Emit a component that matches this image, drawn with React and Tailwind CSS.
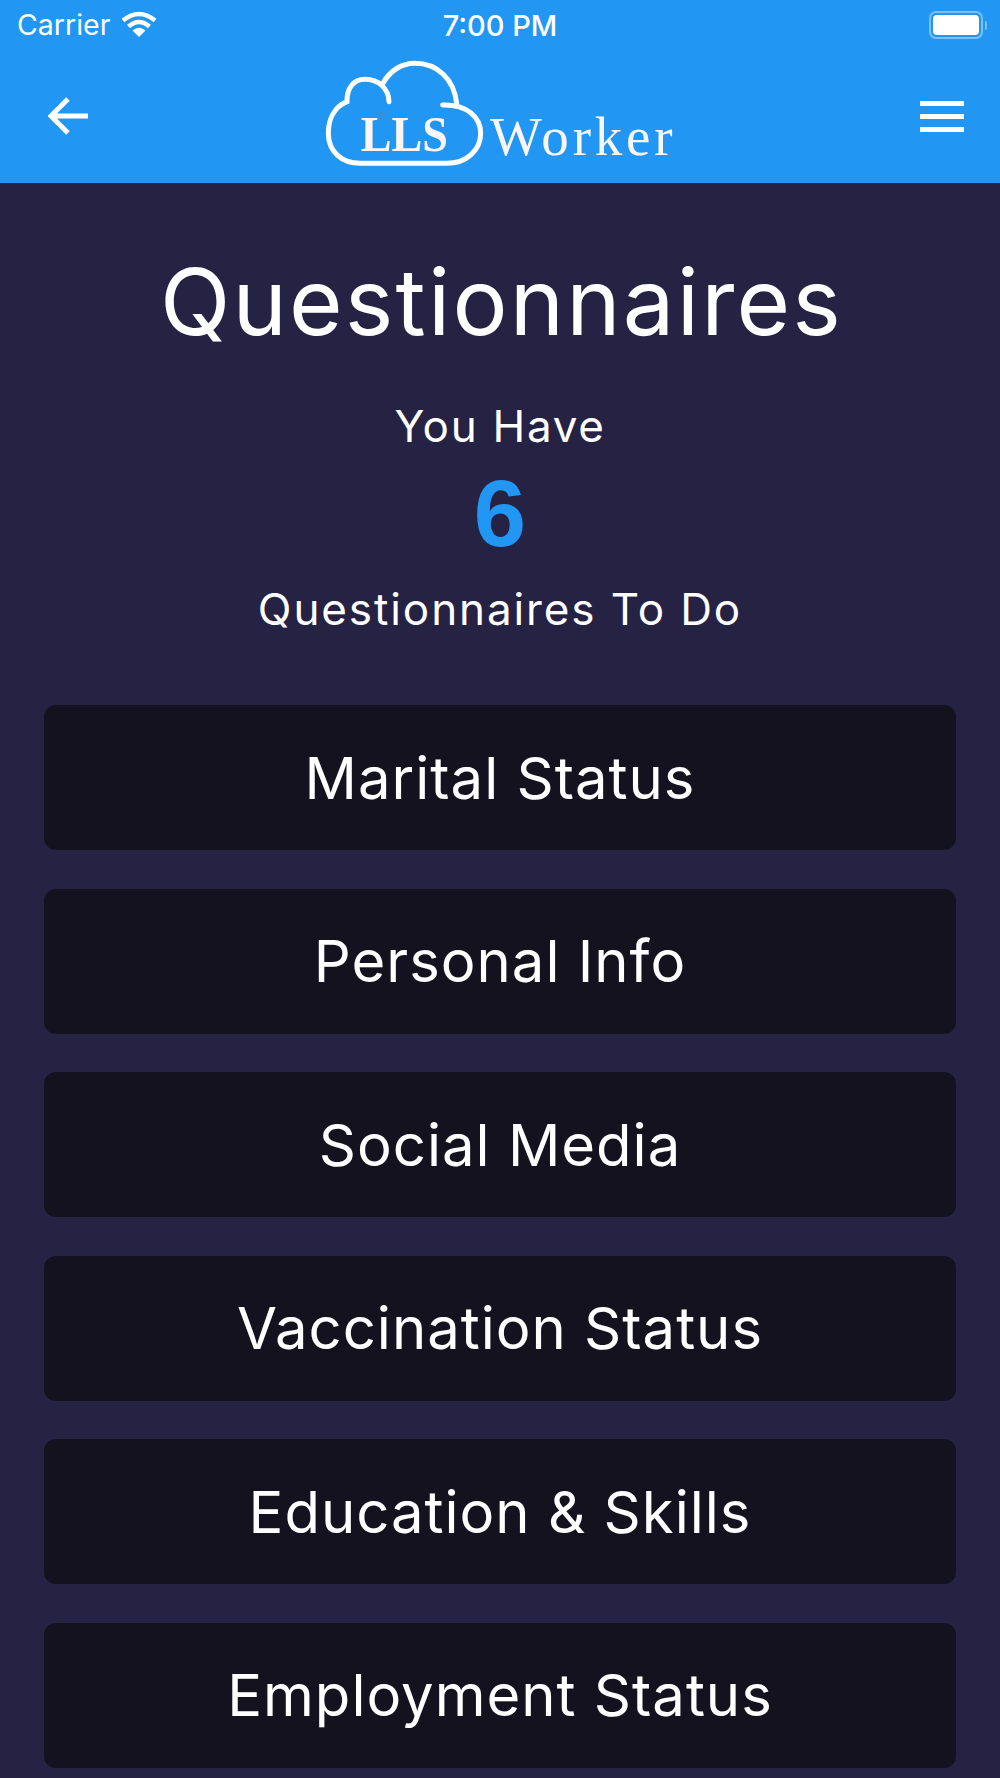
import React from 'react';

const items = ['Marital Status', 'Personal Info', 'Social Media', 'Vaccination Status', 'Education & Skills', 'Employment Status'];

const WifiIcon = () => (
  <svg width="38" height="28" viewBox="0 0 38 28" className="shrink-0 -mt-[3px]">
    <path d="M19 27 L12.5 20.5 Q19 15 25.5 20.5 Z" fill="#fff" />
    <path d="M8.5 16.5 Q19 7.5 29.5 16.5" fill="none" stroke="#fff" strokeWidth="4.5" />
    <path d="M3 10.5 Q19 -2.5 35 10.5" fill="none" stroke="#fff" strokeWidth="4.5" />
  </svg>
);

const BatteryIcon = () => (
  <div className="flex items-center gap-[2px]">
    <div className="w-[54px] h-[28px] rounded-[7px] border-[2px] border-white/40 p-[2px]">
      <div className="w-full h-full rounded-[4px] bg-white" />
    </div>
    <div className="w-[2px] h-[9px] rounded-r-full bg-white/40" />
  </div>
);

const Logo = () => (
  <svg width="400" height="125" viewBox="0 0 1200 375" className="block">
    <path
      d="M267 155 C266 115 235 88 195 88 C160 88 140 115 141 155 C105 170 85 205 85 250 C85 305 125 340 180 340 L440 340 C500 340 542 300 542 250 C542 200 500 163 428 165 M470 160 C462 85 410 40 345 40 C305 40 270 62 250 98"
      fill="none"
      stroke="#fff"
      strokeWidth="15"
      strokeLinecap="round"
    />
    <text x="182" y="302" fontFamily="'Liberation Serif', serif" fontWeight="700" fontSize="152" fill="#fbf5f5" textLength="262" lengthAdjust="spacingAndGlyphs">LLS</text>
    <text x="570" y="314" fontFamily="'Liberation Serif', serif" fontSize="165" fill="#fbf5f5" textLength="548" lengthAdjust="spacing">Worker</text>
  </svg>
);

export default function App() {
  return (
    <div className="w-[1000px] h-[1778px] overflow-hidden bg-[#252244] text-white font-['Inter',sans-serif]">
      {/* Header */}
      <div className="h-[183px] bg-[#2196f3]">
        <div className="h-[50px] flex items-center justify-between pl-[17px] pr-[13px] relative">
          <div className="flex items-center gap-[10px]">
            <span className="text-[28.5px] leading-none">Carrier</span>
            <WifiIcon />
          </div>
          <span className="absolute left-0 right-0 text-center text-[29px] leading-none font-medium">7:00 PM</span>
          <BatteryIcon />
        </div>
        <div className="h-[133px] flex items-start justify-between pl-[48px] pr-[36px] relative">
          <svg width="40" height="38" viewBox="0 0 40 38" className="mt-[47px]">
            <path d="M40 19 H3 M20 2 L3 19 L20 36" fill="none" stroke="#fff" strokeWidth="5" />
          </svg>
          <div className="absolute left-[300px] top-0">
            <Logo />
          </div>
          <div className="mt-[51px] w-[44px] flex flex-col gap-[8px]">
            <div className="h-[5px] bg-white" />
            <div className="h-[5px] bg-white" />
            <div className="h-[5px] bg-white" />
          </div>
        </div>
      </div>

      {/* Content */}
      <div className="flex flex-col items-center">
        <h1 className="mt-[64px] ml-[3px] text-[92px] leading-[110px] font-normal tracking-[2.2px]">Questionnaires</h1>
        <p className="mt-[42px] text-[44px] leading-[54px] tracking-[1.7px]">You Have</p>
        <p className="mt-[18px] text-[94px] leading-[86px] font-bold text-[#2196f3] font-['Liberation_Sans',sans-serif]">6</p>
        <p className="mt-[25px] text-[44px] leading-[54px] tracking-[1.9px]">Questionnaires To Do</p>
      </div>

      <div className="mt-[69px] px-[44px] flex flex-col gap-[38.6px]">
        {items.map((item) => (
          <div key={item} className="h-[145px] rounded-[12px] bg-[#14121f] flex items-center justify-center text-[58px] leading-none tracking-[1px]">
            {item}
          </div>
        ))}
      </div>
    </div>
  );
}
